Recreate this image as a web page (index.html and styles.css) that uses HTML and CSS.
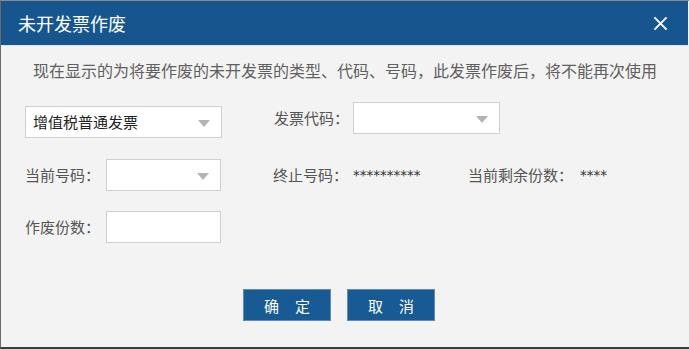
FILE: index.html
```html
<!DOCTYPE html>
<html lang="zh-CN">
<head>
<meta charset="utf-8">
<title>未开发票作废</title>
<link rel="stylesheet" href="styles.css">
</head>
<body>
<div class="dialog">
  <div class="header">
    <span class="title">未开发票作废</span>
    <svg class="close" width="16" height="16" viewBox="0 0 16 16"><path d="M1.5 1.5 L14.5 14.5 M14.5 1.5 L1.5 14.5" stroke="#fff" stroke-width="2" fill="none"/></svg>
  </div>
  <div class="content">
    <p class="desc">现在显示的为将要作废的未开发票的类型、代码、号码，此发票作废后，将不能再次使用</p>
    <div class="row row1">
      <div class="select wide"><span class="sel-text">增值税普通发票</span><span class="arrow"></span></div>
      <div class="group g2">
        <span class="label">发票代码：</span>
        <div class="select mid"><span class="sel-text"></span><span class="arrow"></span></div>
      </div>
    </div>
    <div class="row row2">
      <span class="label lab1">当前号码：</span>
      <div class="select small"><span class="sel-text"></span><span class="arrow"></span></div>
      <div class="group g2">
        <span class="label">终止号码：</span><span class="value">**********</span>
      </div>
      <div class="group g3">
        <span class="label">当前剩余份数：</span><span class="value">****</span>
      </div>
    </div>
    <div class="row row3">
      <span class="label lab1">作废份数：</span>
      <div class="input small"></div>
    </div>
    <div class="buttons">
      <button class="btn">确定</button>
      <button class="btn">取消</button>
    </div>
  </div>
</div>
</body>
</html>
```

FILE: styles.css
```css
html, body {
  margin: 0;
  padding: 0;
  background: #f3f3f3;
}
.dialog {
  width: 689px;
  height: 349px;
  box-sizing: border-box;
  background: #f3f3f3;
  border-top: 1px solid #8c8c8c;
  border-left: 1px solid #6a6a6a;
  border-bottom: 2px solid #3d3d3d;
  font-family: "Noto Sans CJK SC", "Noto Sans", sans-serif;
  overflow: hidden;
}
.header {
  height: 44px;
  background: #17558f;
  border-bottom: 1px solid #e4e4e4;
  display: flex;
  align-items: center;
  justify-content: space-between;
  padding: 0 20px 0 17px;
  margin-right: 1px;
}
.title {
  color: #ffffff;
  font-size: 18px;
  line-height: 22px;
}
.close {
  display: block;
  width: 15px;
  height: 15px;
}
.content {
  padding: 13px 0 0 24px;
}
.desc {
  margin: 0 0 21px 8px;
  font-size: 16px;
  line-height: 22px;
  color: #606060;
  white-space: nowrap;
}
.row {
  display: flex;
  align-items: center;
}
.row1 {
  align-items: flex-start;
}
.row1 .wide {
  margin-top: 4px;
}
.row2 {
  margin-top: 21px;
}
.row3 {
  margin-top: 20px;
}
.label {
  font-size: 15px;
  line-height: 20px;
  color: #555555;
  white-space: nowrap;
}
.lab1 {
  width: 81px;
}
.group {
  display: flex;
  align-items: center;
}
.g2 {
  margin-left: 52px;
}
.row1 .g2 .label {
  width: 79px;
}
.row2 .g2 {
  width: 195px;
}
.value {
  font-family: "DejaVu Sans", sans-serif;
  font-size: 13.5px;
  color: #333333;
  margin-left: 5px;
  line-height: 20px;
}
.g3 .value {
  margin-left: 7px;
}
.select, .input {
  box-sizing: border-box;
  height: 32px;
  background: #ffffff;
  border: 1px solid #cfcfcf;
  display: flex;
  align-items: center;
  justify-content: space-between;
  padding: 0 11px 0 7px;
}
.wide {
  width: 197px;
}
.mid {
  width: 147px;
}
.small {
  width: 115px;
}
.sel-text {
  font-size: 15px;
  color: #222222;
  line-height: 20px;
}
.arrow {
  width: 0;
  height: 0;
  border-left: 6px solid transparent;
  border-right: 6px solid transparent;
  border-top: 7px solid #b4b4b4;
  margin-top: 2px;
}
.buttons {
  display: flex;
  gap: 16px;
  margin-top: 46px;
  padding-left: 218px;
}
.btn {
  box-sizing: border-box;
  width: 88px;
  height: 32px;
  background: #175a94;
  border: 1px solid #5f8cb6;
  color: #ffffff;
  font-family: "Noto Sans CJK SC", sans-serif;
  font-size: 15px;
  letter-spacing: 16px;
  padding: 0 0 0 16px;
  text-align: center;
  margin: 0;
}
```
